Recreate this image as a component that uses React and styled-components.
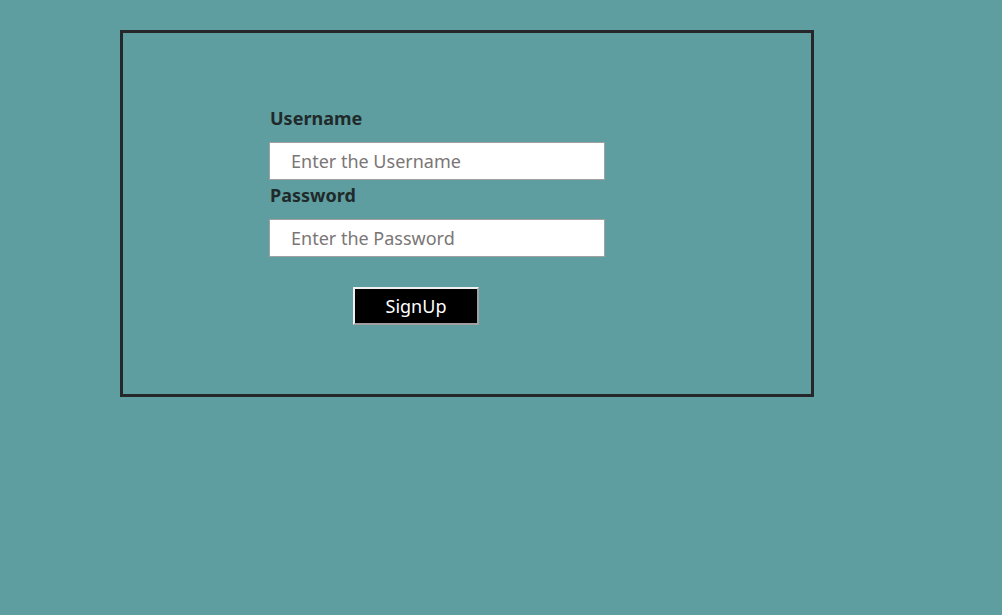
import React from 'react';
import styled, { createGlobalStyle } from 'styled-components';

const GlobalStyle = createGlobalStyle`
  html, body {
    margin: 0;
    padding: 0;
    background-color: #5f9ea0;
    font-family: "Noto Sans", "Open Sans", sans-serif;
  }
`;

const Page = styled.div`
  width: 1002px;
  height: 615px;
  padding: 30px 0 0 120px;
  box-sizing: border-box;
`;

const FormBox = styled.div`
  width: 694px;
  height: 367px;
  box-sizing: border-box;
  border: 3px solid #26272b;
  padding: 73px 0 0 146px;
`;

const Form = styled.form`
  display: flex;
  flex-direction: column;
  width: 336px;
`;

const Label = styled.label`
  display: block;
  font-size: 18px;
  font-weight: 700;
  line-height: 24px;
  color: #1f2a2b;
  margin: ${(p) => (p.$tight ? '3px' : '0')} 0 12px 1px;
`;

const Input = styled.input`
  box-sizing: border-box;
  width: 336px;
  height: 38px;
  border: 1px solid #a0a0a0;
  background: #fff;
  padding: 0 0 0 21px;
  font-family: "Noto Sans", "Open Sans", sans-serif;
  font-size: 18px;
  color: #333;
  outline: none;

  &::placeholder {
    color: #7a7676;
  }
`;

const Button = styled.button`
  box-sizing: border-box;
  margin: 30px 0 0 84px;
  width: 126px;
  height: 38px;
  background: #000;
  color: #fff;
  border: 2px solid;
  border-color: #f0f0f0 #a0a0a0 #a0a0a0 #f0f0f0;
  font-family: "Noto Sans", "Open Sans", sans-serif;
  font-size: 18px;
  padding: 0;
  cursor: pointer;
`;

export default function App() {
  return (
    <>
      <GlobalStyle />
      <Page>
        <FormBox>
          <Form onSubmit={(e) => e.preventDefault()}>
            <Label htmlFor="username">Username</Label>
            <Input id="username" placeholder="Enter the Username" />
            <Label htmlFor="password" $tight>Password</Label>
            <Input id="password" type="password" placeholder="Enter the Password" />
            <Button type="submit">SignUp</Button>
          </Form>
        </FormBox>
      </Page>
    </>
  );
}
